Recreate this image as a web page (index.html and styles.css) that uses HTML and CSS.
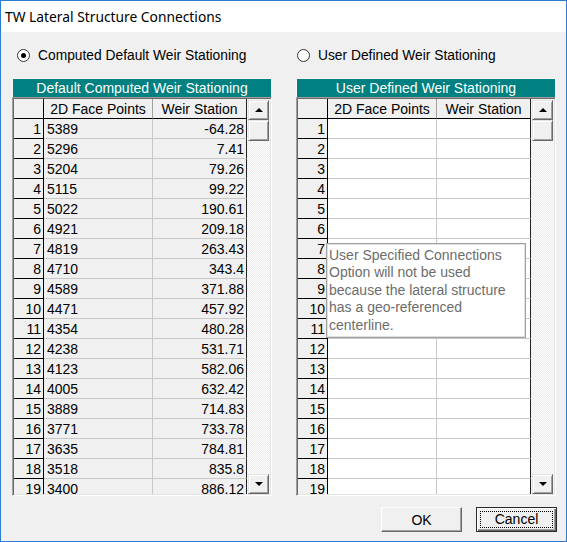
FILE: index.html
```html
<!DOCTYPE html>
<html lang="en">
<head>
    <meta charset="UTF-8">
    <meta name="viewport" content="width=device-width, initial-scale=1.0">
    <title>TW Lateral Structure Connections</title>
    <link rel="stylesheet" href="styles.css">
</head>
<body>
<div class="window">
    <div class="titlebar">TW Lateral Structure Connections</div>

    <div class="content">
        <div class="panels">
            <div class="panel left">
                <label class="option"><span class="radio checked"></span>Computed Default Weir Stationing</label>
                <div class="caption">Default Computed Weir Stationing</div>
                <div class="grid readonly">
                    <div class="sheet">
                        <table>
                            <tr class="head"><th class="rowhead"></th><th>2D Face Points</th><th class="last">Weir Station</th></tr>
                            <tr><td class="rowhead">1</td><td>5389</td><td class="num last">-64.28</td></tr>
                            <tr><td class="rowhead">2</td><td>5296</td><td class="num last">7.41</td></tr>
                            <tr><td class="rowhead">3</td><td>5204</td><td class="num last">79.26</td></tr>
                            <tr><td class="rowhead">4</td><td>5115</td><td class="num last">99.22</td></tr>
                            <tr><td class="rowhead">5</td><td>5022</td><td class="num last">190.61</td></tr>
                            <tr><td class="rowhead">6</td><td>4921</td><td class="num last">209.18</td></tr>
                            <tr><td class="rowhead">7</td><td>4819</td><td class="num last">263.43</td></tr>
                            <tr><td class="rowhead">8</td><td>4710</td><td class="num last">343.4</td></tr>
                            <tr><td class="rowhead">9</td><td>4589</td><td class="num last">371.88</td></tr>
                            <tr><td class="rowhead">10</td><td>4471</td><td class="num last">457.92</td></tr>
                            <tr><td class="rowhead">11</td><td>4354</td><td class="num last">480.28</td></tr>
                            <tr><td class="rowhead">12</td><td>4238</td><td class="num last">531.71</td></tr>
                            <tr><td class="rowhead">13</td><td>4123</td><td class="num last">582.06</td></tr>
                            <tr><td class="rowhead">14</td><td>4005</td><td class="num last">632.42</td></tr>
                            <tr><td class="rowhead">15</td><td>3889</td><td class="num last">714.83</td></tr>
                            <tr><td class="rowhead">16</td><td>3771</td><td class="num last">733.78</td></tr>
                            <tr><td class="rowhead">17</td><td>3635</td><td class="num last">784.81</td></tr>
                            <tr><td class="rowhead">18</td><td>3518</td><td class="num last">835.8</td></tr>
                            <tr><td class="rowhead">19</td><td>3400</td><td class="num last">886.12</td></tr>
                        </table>
                    </div>
                    <div class="scrollbar">
                        <div class="arrow up"></div>
                        <div class="thumb"></div>
                        <div class="track"></div>
                        <div class="arrow down"></div>
                    </div>
                </div>
            </div>

            <div class="panel right">
                <label class="option"><span class="radio"></span>User Defined Weir Stationing</label>
                <div class="caption">User Defined Weir Stationing</div>
                <div class="grid">
                    <div class="sheet">
                        <table>
                            <tr class="head"><th class="rowhead"></th><th>2D Face Points</th><th class="last">Weir Station</th></tr>
                            <tr><td class="rowhead">1</td><td></td><td class="last"></td></tr>
                            <tr><td class="rowhead">2</td><td></td><td class="last"></td></tr>
                            <tr><td class="rowhead">3</td><td></td><td class="last"></td></tr>
                            <tr><td class="rowhead">4</td><td></td><td class="last"></td></tr>
                            <tr><td class="rowhead">5</td><td></td><td class="last"></td></tr>
                            <tr><td class="rowhead">6</td><td></td><td class="last"></td></tr>
                            <tr><td class="rowhead">7</td><td></td><td class="last"></td></tr>
                            <tr><td class="rowhead">8</td><td></td><td class="last"></td></tr>
                            <tr><td class="rowhead">9</td><td></td><td class="last"></td></tr>
                            <tr><td class="rowhead">10</td><td></td><td class="last"></td></tr>
                            <tr><td class="rowhead">11</td><td></td><td class="last"></td></tr>
                            <tr><td class="rowhead">12</td><td></td><td class="last"></td></tr>
                            <tr><td class="rowhead">13</td><td></td><td class="last"></td></tr>
                            <tr><td class="rowhead">14</td><td></td><td class="last"></td></tr>
                            <tr><td class="rowhead">15</td><td></td><td class="last"></td></tr>
                            <tr><td class="rowhead">16</td><td></td><td class="last"></td></tr>
                            <tr><td class="rowhead">17</td><td></td><td class="last"></td></tr>
                            <tr><td class="rowhead">18</td><td></td><td class="last"></td></tr>
                            <tr><td class="rowhead">19</td><td></td><td class="last"></td></tr>
                        </table>
                    </div>
                    <div class="scrollbar">
                        <div class="arrow up"></div>
                        <div class="thumb"></div>
                        <div class="track"></div>
                        <div class="arrow down"></div>
                    </div>
                    <div class="tooltip">User Specified Connections Option will not be used because the lateral structure has a geo-referenced centerline.</div>
                </div>
            </div>
        </div>

        <div class="actions">
            <button class="btn">OK</button>
            <button class="btn default"><span>Cancel</span></button>
        </div>
    </div>
</div>
</body>
</html>
```

FILE: styles.css
```css
* {
    box-sizing: border-box;
}

body {
    margin: 0;
    background: #f0f0f0;
    font-family: "Liberation Sans", Arial, sans-serif;
    font-size: 14px;
    color: #000;
}

.window {
    width: 567px;
    height: 542px;
    border: 1px solid #2b7cd3;
    background: #f0f0f0;
    display: flex;
    flex-direction: column;
}

.titlebar {
    height: 31px;
    background: #fff;
    padding-left: 4px;
    line-height: 31px;
    font-family: "Noto Sans", "Liberation Sans", sans-serif;
    font-size: 13.8px;
}

.content {
    flex: 1;
    display: flex;
    flex-direction: column;
}

.panels {
    display: flex;
    gap: 24px;
    padding: 14px 10px 0 11px;
}

.panel {
    width: 260px;
    display: flex;
    flex-direction: column;
}

.option {
    height: 18px;
    display: flex;
    align-items: center;
    gap: 8px;
    margin-bottom: 14px;
    font-size: 13.8px;
}

.left .option {
    padding-left: 5px;
}

.right .option {
    padding-left: 1px;
}

.radio {
    width: 13px;
    height: 13px;
    border: 1px solid #333;
    border-radius: 50%;
    background: #fff;
    display: flex;
    align-items: center;
    justify-content: center;
}

.radio.checked::after {
    content: "";
    width: 5px;
    height: 5px;
    border-radius: 50%;
    background: #000;
}

.caption {
    height: 19px;
    line-height: 18px;
    background: #008080;
    color: #fff;
    text-align: center;
    border: 1px solid #f8f8f8;
    border-bottom: none;
}

.grid {
    position: relative;
    height: 399px;
    display: flex;
    border: 1px solid;
    border-color: #a0a0a0 #fff #fff #a0a0a0;
    box-shadow: inset 1px 1px #696969, inset -1px -1px #e3e3e3;
    padding: 1px;
}

.sheet {
    width: 233px;
    overflow: hidden;
}

table {
    border-collapse: separate;
    border-spacing: 0;
    table-layout: fixed;
    width: 233px;
}

th, td {
    height: 20px;
    padding: 2px 2px 0 3px;
    line-height: 17px;
    border-right: 1px solid #c8c8c8;
    border-bottom: 1px solid #c8c8c8;
    font-weight: normal;
    white-space: nowrap;
    overflow: hidden;
    background: #fff;
}

.readonly td {
    background: #f0f0f0;
}

th {
    background: #f0f0f0;
    text-align: center;
    border-right-color: #a0a0a0;
    border-bottom-color: #000;
    padding: 2px 0 0 0;
}

.rowhead {
    width: 30px;
    text-align: right;
    padding: 2px 2px 0 0;
    border-right-color: #000;
    border-bottom-color: #000;
}

td.rowhead {
    background: #f0f0f0;
}

th:nth-child(2) {
    width: 109px;
}

.last {
    width: 94px;
    border-right-color: #222;
}

th.last {
    border-right-color: #222;
}

.num {
    text-align: right;
}

.scrollbar {
    width: 23px;
    display: flex;
    flex-direction: column;
    padding: 0 1px 0 1px;
    background: repeating-conic-gradient(#ececec 0 25%, #fdfdfd 0 50%) 0 0 / 2px 2px;
}

.arrow, .thumb {
    background: #f0f0f0;
    border: 1px solid;
    border-color: #e3e3e3 #696969 #696969 #e3e3e3;
    box-shadow: inset 1px 1px #fff, inset -1px -1px #a0a0a0;
    display: flex;
    align-items: center;
    justify-content: center;
}

.arrow {
    height: 20px;
}

.arrow.up {
    margin-top: 1px;
}

.thumb {
    height: 21px;
}

.track {
    flex: 1;
}

.arrow::after {
    content: "";
    border-left: 4px solid transparent;
    border-right: 4px solid transparent;
}

.arrow.up::after {
    border-bottom: 4px solid #000;
}

.arrow.down::after {
    border-top: 4px solid #000;
}

.tooltip {
    position: absolute;
    left: 29px;
    top: 145px;
    width: 200px;
    height: 95px;
    background: #fff;
    border: 1px solid #a0a0a0;
    box-shadow: inset 0 0 0 1px #e0e0e0;
    color: #6d6d6d;
    padding: 3px 4px 0 2px;
    line-height: 17.4px;
}

.actions {
    display: flex;
    justify-content: flex-end;
    gap: 14px;
    padding: 11px 9px 0 0;
}

.btn {
    width: 81px;
    height: 25px;
    font-family: "Liberation Sans", Arial, sans-serif;
    font-size: 14px;
    color: #000;
    background: #f0f0f0;
    border: 1px solid;
    border-color: #fff #696969 #696969 #fff;
    box-shadow: inset -1px -1px #a0a0a0;
    padding: 1px 0 0;
}

.btn.default {
    border: 1px solid #2a2a2a;
    box-shadow: inset 1px 1px #fff, inset -1px -1px #696969, inset -2px -2px #a0a0a0;
    padding: 3px;
}

.btn.default span {
    display: block;
    height: 100%;
    line-height: 16px;
    outline: 1px dotted #000;
    outline-offset: -1px;
}
```
